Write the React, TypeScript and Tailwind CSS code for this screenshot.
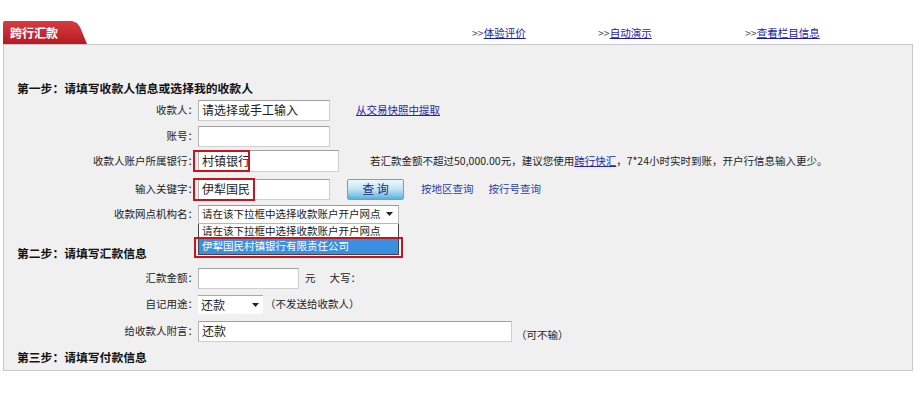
import React from "react";

const FONT = { fontFamily: '"Noto Sans CJK SC", "Noto Sans", sans-serif' };

function Label({ children }: { children: React.ReactNode }) {
  return (
    <div className="w-[194px] shrink-0 whitespace-nowrap text-right text-[10.5px] leading-[14px] text-[#222]">
      {children}
    </div>
  );
}

function Input({
  w,
  h,
  value,
}: {
  w: string;
  h: string;
  value?: string;
}) {
  return (
    <div
      className={`${w} ${h} flex items-center whitespace-nowrap border border-[#cfcfcf] border-t-[#a0a0a0] border-l-[#b4b4b4] bg-white pl-[3px] text-[12px] leading-[14px] text-[#222]`}
    >
      {value}
    </div>
  );
}

function Arrow() {
  return (
    <svg width="7" height="4" viewBox="0 0 7 4" className="shrink-0">
      <path d="M0 0 H7 L3.5 4 Z" fill="#222" />
    </svg>
  );
}

function Heading({ mt, children }: { mt: string; children: React.ReactNode }) {
  return (
    <div className={`flex h-[22px] items-center whitespace-nowrap pl-[13px] text-[11.8px] font-bold leading-[14px] text-[#111] ${mt}`}>
      {children}
    </div>
  );
}

export default function App() {
  return (
    <div className="h-[420px] w-[924px] overflow-hidden bg-white pt-[21px]" style={FONT}>
      {/* header */}
      <div className="flex h-[23px] items-center">
        <div className="ml-[3px] flex h-[23px] w-[84px] shrink-0 items-center rounded-tl-[2px] bg-linear-to-b from-[#d93a40] to-[#b51a22] pl-[7px] text-[12px] font-bold text-white [clip-path:polygon(0_0,69px_0,74px_2px,77px_6px,84px_23px,0_23px)]">
          跨行汇款
        </div>
        <div className="ml-[385px] w-[126px] shrink-0 whitespace-nowrap text-[10.5px] leading-[14px]">
          <span className="text-[#444]">&gt;&gt;</span>
          <span className="text-[#1c1ca8] underline">体验评价</span>
        </div>
        <div className="w-[147px] shrink-0 whitespace-nowrap text-[10.5px] leading-[14px]">
          <span className="text-[#444]">&gt;&gt;</span>
          <span className="text-[#1c1ca8] underline">自动演示</span>
        </div>
        <div className="shrink-0 whitespace-nowrap text-[10.5px] leading-[14px]">
          <span className="text-[#444]">&gt;&gt;</span>
          <span className="text-[#1c1ca8] underline">查看栏目信息</span>
        </div>
      </div>

      {/* panel */}
      <div className="ml-[3px] h-[327px] w-[910px] border border-[#c8c8c8] bg-[#f0f0f0] pt-[32px]">
        <Heading mt="mt-0">第一步：请填写收款人信息或选择我的收款人</Heading>

        <div className="flex h-[22px] items-center">
          <Label>收款人：</Label>
          <Input w="w-[132px]" h="h-[21px]" value="请选择或手工输入" />
          <span className="ml-[26px] whitespace-nowrap text-[10.5px] leading-[14px] text-[#2424b0] underline">从交易快照中提取</span>
        </div>

        <div className="mt-[4px] flex h-[22px] items-center">
          <Label>账号：</Label>
          <Input w="w-[132px]" h="h-[21px]" />
        </div>

        <div className="mt-[3px] flex h-[22px] items-center">
          <Label>收款人账户所属银行：</Label>
          <div className="relative">
            <Input w="w-[141px]" h="h-[22px]" value="村镇银行" />
            <div className="absolute left-[-5px] top-0 h-[22px] w-[57px] border-2 border-[#c8141e]" />
          </div>
          <span className="ml-[31px] whitespace-nowrap text-[10.5px] leading-[14px] text-[#222]">
            若汇款金额不超过50,000.00元，建议您使用
            <span className="text-[#2424b0] underline">跨行快汇</span>
            ，7*24小时实时到账，开户行信息输入更少。
          </span>
        </div>

        <div className="mt-[6px] flex h-[22px] items-center">
          <Label>输入关键字：</Label>
          <div className="relative">
            <Input w="w-[132px]" h="h-[21px]" value="伊犁国民" />
            <div className="absolute left-[-5px] top-[-1px] h-[23px] w-[62px] border-2 border-[#c8141e]" />
          </div>
          <div className="ml-[17px] flex h-[21px] w-[57px] items-center justify-center rounded-[2px] border border-[#7f9db0] bg-linear-to-b from-[#eef8fd] via-[#bfe3f3] to-[#59b1d9] text-[12px] leading-[14px] text-[#1a2c86]">
            查 询
          </div>
          <span className="ml-[17px] whitespace-nowrap text-[10.5px] leading-[14px] text-[#1f3fa6]">按地区查询</span>
          <span className="ml-[15px] whitespace-nowrap text-[10.5px] leading-[14px] text-[#1f3fa6]">按行号查询</span>
        </div>

        <div className="mt-[3px] flex h-[22px] items-center">
          <Label>收款网点机构名：</Label>
          <div className="relative">
            <div className="flex h-[19px] w-[201px] items-center justify-between whitespace-nowrap border border-[#b8b8b8] border-t-[#9a9a9a] bg-white pl-[3px] pr-[5px] text-[10.5px] leading-[14px] text-[#222]">
              <span>请在该下拉框中选择收款账户开户网点</span>
              <Arrow />
            </div>
            <div className="absolute left-0 top-[19px] z-10 w-[201px] border-x border-b border-[#444] bg-white">
              <div className="h-[14px] overflow-hidden whitespace-nowrap pl-[3px] text-[10.5px] leading-[14px] text-[#222]">
                请在该下拉框中选择收款账户开户网点
              </div>
              <div className="h-[16px] whitespace-nowrap bg-[#3b8fe0] pl-[3px] text-[10.5px] leading-[16px] text-white">
                伊犁国民村镇银行有限责任公司
              </div>
            </div>
            <div className="absolute left-[-4px] top-[32px] z-20 h-[21px] w-[209px] border-2 border-[#c8141e]" />
          </div>
        </div>

        <Heading mt="mt-[17px]">第二步：请填写汇款信息</Heading>

        <div className="mt-[3px] flex h-[22px] items-center">
          <Label>汇款金额：</Label>
          <Input w="w-[101px]" h="h-[21px]" />
          <span className="ml-[6px] text-[10.5px] leading-[14px] text-[#222]">元</span>
          <span className="ml-[14px] whitespace-nowrap text-[10.5px] leading-[14px] text-[#222]">大写：</span>
        </div>

        <div className="mt-[4px] flex h-[22px] items-center">
          <Label>自记用途：</Label>
          <div className="flex h-[19px] w-[65px] items-center justify-between border-t border-[#a8a8a8] bg-white pl-[3px] pr-[4px] text-[12px] leading-[14px] text-[#222]">
            <span>还款</span>
            <Arrow />
          </div>
          <span className="ml-[2px] whitespace-nowrap text-[10.5px] leading-[14px] text-[#222]">（不发送给收款人）</span>
        </div>

        <div className="mt-[5px] flex h-[22px] items-center">
          <Label>给收款人附言：</Label>
          <Input w="w-[314px]" h="h-[21px]" value="还款" />
          <span className="ml-[4px] mt-[8px] whitespace-nowrap text-[10.5px] leading-[14px] text-[#222]">（可不输）</span>
        </div>

        <Heading mt="mt-[4px]">第三步：请填写付款信息</Heading>
      </div>
    </div>
  );
}
